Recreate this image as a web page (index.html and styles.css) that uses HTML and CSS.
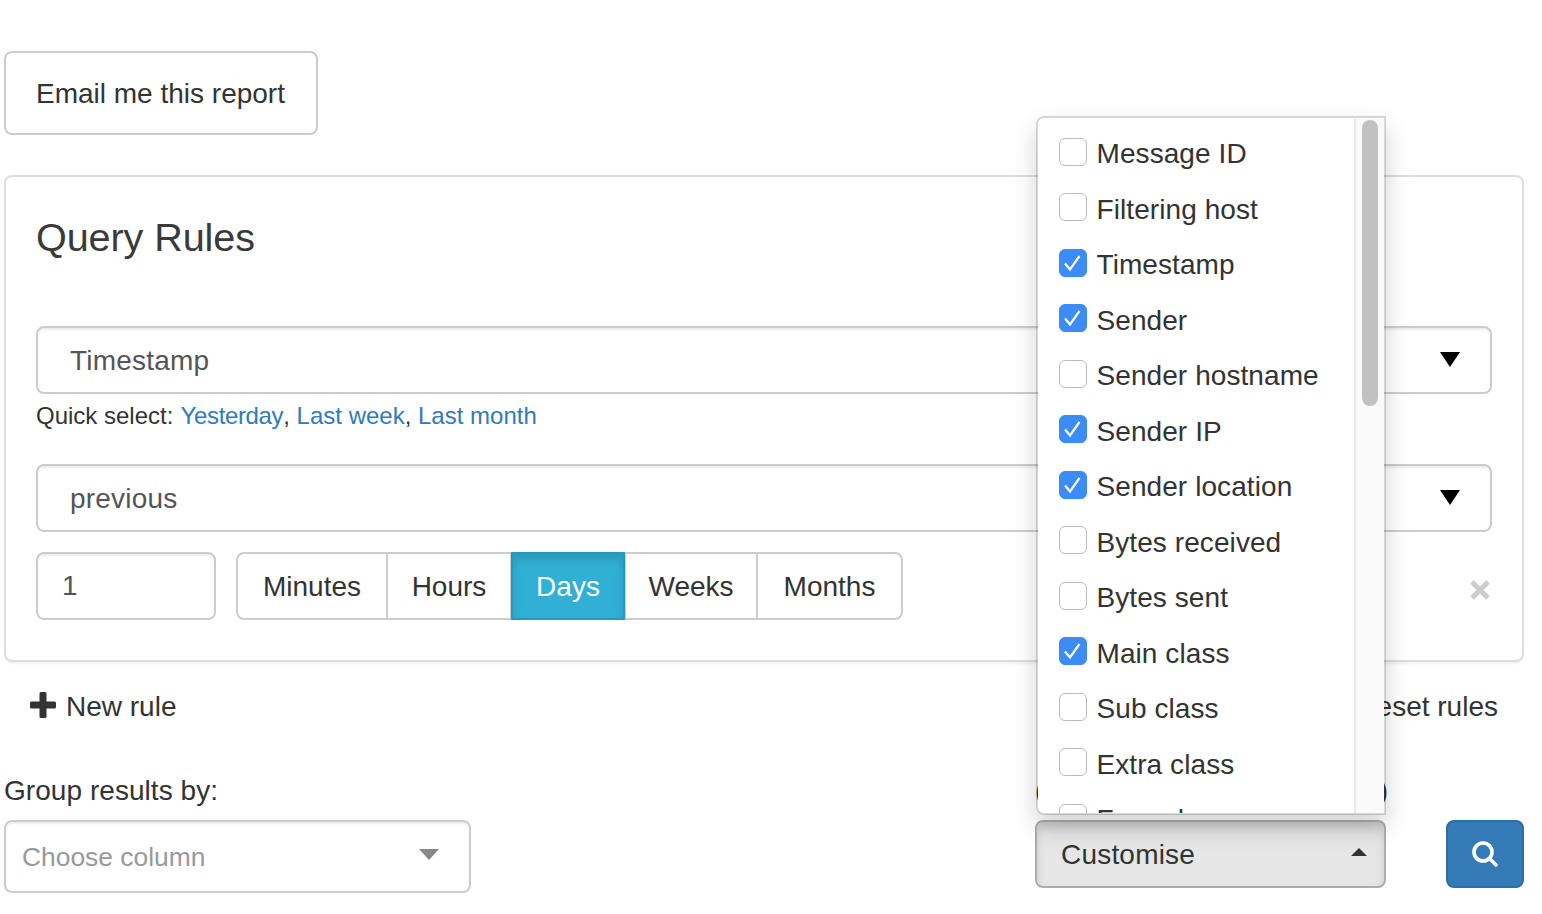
FILE: index.html
```html
<!DOCTYPE html>
<html lang="en">
<head>
<meta charset="utf-8">
<title>Query Rules</title>
<link rel="stylesheet" href="styles.css">
</head>
<body>
<main class="page">
  <button class="btn email-btn" type="button">Email me this report</button>

  <section class="panel">
    <h2 class="panel-title">Query Rules</h2>

    <div class="select rule-select">
      <span>Timestamp</span>
      <svg class="arrow-black" width="20" height="15" viewBox="0 0 20 15"><path d="M0 0H20L10 15Z"/></svg>
    </div>
    <p class="quick">Quick select: <a class="quick-first" href="#">Yesterday</a>, <a href="#">Last week</a>, <a href="#">Last month</a></p>

    <div class="select rule-select second">
      <span>previous</span>
      <svg class="arrow-black" width="20" height="15" viewBox="0 0 20 15"><path d="M0 0H20L10 15Z"/></svg>
    </div>

    <div class="rule-row">
      <div class="number-input">1</div>
      <div class="segmented">
        <button class="seg seg-minutes" type="button">Minutes</button>
        <button class="seg seg-hours" type="button">Hours</button>
        <button class="seg seg-days active" type="button">Days</button>
        <button class="seg seg-weeks" type="button">Weeks</button>
        <button class="seg seg-months" type="button">Months</button>
      </div>
      <svg class="remove" width="20" height="20" viewBox="0 0 20 20"><path d="M2 2L18 18M18 2L2 18"/></svg>
    </div>
  </section>

  <div class="links">
    <a class="link new-rule" href="#">
      <svg class="plus" width="26" height="26" viewBox="0 0 26 26"><path d="M9.5 1.5Q9.5 0 11 0H15Q16.500 0 16.500 1.500V9.500H24.500Q26 9.500 26 11V15Q26 16.500 24.500 16.500H16.500V24.500Q16.500 26 15 26H11Q9.500 26 9.500 24.500V16.500H1.500Q0 16.500 0 15V11Q0 9.500 1.500 9.500H9.500Z"/></svg>
      New rule
    </a>
    <a class="link" href="#">Reset rules</a>
  </div>

  <div class="bottom">
    <div class="group-col">
      <label class="label">Group results by:</label>
      <div class="select choose">
        <span>Choose column</span>
        <svg width="20" height="11" viewBox="0 0 20 11"><path d="M0 0H20L10 11Z"/></svg>
      </div>
    </div>

    <div class="customise-col">
      <div class="label parens"><span>(</span><span>)</span></div>
      <div class="customise-wrap">
        <div class="menu">
          <ul class="menu-list">
            <li class="item"><span class="check"></span>Message ID</li>
            <li class="item"><span class="check"></span>Filtering host</li>
            <li class="item"><span class="check on"><svg width="28" height="28" viewBox="0 0 28 28"><path d="M6 14.500L11 20.500L20.500 7"/></svg></span>Timestamp</li>
            <li class="item"><span class="check on"><svg width="28" height="28" viewBox="0 0 28 28"><path d="M6 14.500L11 20.500L20.500 7"/></svg></span>Sender</li>
            <li class="item"><span class="check"></span>Sender hostname</li>
            <li class="item"><span class="check on"><svg width="28" height="28" viewBox="0 0 28 28"><path d="M6 14.500L11 20.500L20.500 7"/></svg></span>Sender IP</li>
            <li class="item"><span class="check on"><svg width="28" height="28" viewBox="0 0 28 28"><path d="M6 14.500L11 20.500L20.500 7"/></svg></span>Sender location</li>
            <li class="item"><span class="check"></span>Bytes received</li>
            <li class="item"><span class="check"></span>Bytes sent</li>
            <li class="item"><span class="check on"><svg width="28" height="28" viewBox="0 0 28 28"><path d="M6 14.500L11 20.500L20.500 7"/></svg></span>Main class</li>
            <li class="item"><span class="check"></span>Sub class</li>
            <li class="item"><span class="check"></span>Extra class</li>
            <li class="item"><span class="check"></span>Forced</li>
          </ul>
          <div class="scroll-track"><div class="scroll-thumb"></div></div>
        </div>
        <button class="customise" type="button">
          <span>Customise</span>
          <svg width="16" height="8" viewBox="0 0 16 8"><path d="M8 0L16 8H0Z"/></svg>
        </button>
      </div>
    </div>

    <button class="search" type="button" aria-label="Search">
      <svg width="28" height="28" viewBox="0 0 28 28"><circle cx="12" cy="12" r="9"/><path d="M18.500 18.500L25 25"/></svg>
    </button>
  </div>
</main>
</body>
</html>
```

FILE: styles.css
```css
* { box-sizing: border-box; }

html, body {
  margin: 0;
  height: 100%;
  background: #fff;
}

body {
  overflow: hidden;
  font-family: "Liberation Sans", Arial, sans-serif;
  font-size: 28px;
  line-height: 40px;
  color: #333;
}

.page {
  padding: 51px 18px 0 4px;
}

.btn {
  display: block;
  width: 314px;
  height: 84px;
  padding: 2px 0 0 30px;
  text-align: left;
  font: inherit;
  color: #333;
  background: #fff;
  border: 2px solid #ccc;
  border-radius: 8px;
}

.panel {
  height: 487px;
  margin-top: 40px;
  padding: 31px 30px 30px;
  border: 2px solid #ddd;
  border-radius: 8px;
  box-shadow: 0 2px 2px rgba(0, 0, 0, .05);
}

.panel-title {
  height: 58px;
  margin: 0 0 60px;
  font-size: 39.6px;
  font-weight: 400;
  line-height: 58px;
  letter-spacing: -0.1px;
  color: #3a3a3a;
}

.select {
  display: flex;
  align-items: center;
  justify-content: space-between;
  border: 2px solid #ccc;
  border-radius: 8px;
  background: #fff;
  box-shadow: inset 0 2px 2px rgba(0, 0, 0, .075);
}

.rule-select {
  height: 68px;
  padding: 0 30px 0 32px;
  color: #555;
  letter-spacing: .2px;
}

.rule-select span { padding-top: 2px; }

.arrow-black { margin-top: -2px; }
.arrow-black path { fill: #000; }

.quick {
  height: 44px;
  margin: 0 0 26px;
  font-size: 24px;
  line-height: 44px;
}

.quick a { color: #337ab7; text-decoration: none; }
.quick .quick-first { margin-left: .5px; letter-spacing: -0.35px; }

.rule-row {
  display: flex;
  align-items: center;
  height: 68px;
  margin-top: 20px;
}

.number-input {
  width: 180px;
  height: 68px;
  padding: 0 0 0 24px;
  line-height: 64px;
  color: #555;
  border: 2px solid #ccc;
  border-radius: 8px;
  box-shadow: inset 0 2px 2px rgba(0, 0, 0, .075);
}

.segmented {
  display: flex;
  margin-left: 20px;
}

.seg {
  height: 68px;
  padding: 1px 0 0;
  margin-left: -2px;
  font: inherit;
  color: #333;
  background: #fff;
  border: 2px solid #ccc;
}

.seg-minutes { width: 152px; margin-left: 0; border-radius: 8px 0 0 8px; }
.seg-hours { width: 126px; }
.seg-days { width: 114px; margin-left: -1px; }
.seg-weeks { width: 134px; margin-left: -1px; }
.seg-months { width: 147px; border-radius: 0 8px 8px 0; }

.seg.active {
  position: relative;
  color: #fff;
  background: #31b0d5;
  border-color: #269abc;
  box-shadow: inset 0 6px 10px rgba(0, 0, 0, .125);
}

.remove {
  margin-left: auto;
  margin-right: 2px;
  margin-top: 8px;
}

.remove path {
  fill: none;
  stroke: #ccc;
  stroke-width: 5;
}

.links {
  display: flex;
  align-items: center;
  justify-content: space-between;
  height: 48px;
  margin-top: 20px;
  padding: 0 26px;
}

.link {
  display: flex;
  align-items: center;
  padding-top: 2px;
  color: #333;
  text-decoration: none;
}

.plus { margin-right: 10px; margin-top: -4px; }
.plus path { fill: #333; }

.bottom {
  display: flex;
  align-items: flex-start;
  margin-top: 40px;
}

.group-col { width: 467px; }

.label {
  display: block;
  height: 40px;
  margin-bottom: 10px;
  line-height: 42px;
  letter-spacing: .05px;
}

.choose {
  height: 73px;
  padding: 0 30px 0 16px;
  color: #999;
  font-size: 26.4px;
}

.choose svg { margin-top: -4px; }
.choose path { fill: #888; }

.customise-col {
  width: 351px;
  margin-left: auto;
}

.parens {
  display: flex;
  justify-content: space-between;
  margin-right: -2px;
  color: #333;
}

.customise-wrap { position: relative; }

.customise {
  display: flex;
  align-items: center;
  justify-content: space-between;
  width: 351px;
  height: 68px;
  padding: 0 17px 0 24px;
  font: inherit;
  letter-spacing: .2px;
  color: #333;
  background: #e6e6e6;
  border: 2px solid #adadad;
  border-radius: 8px;
  box-shadow: inset 0 6px 10px rgba(0, 0, 0, .125);
}

.customise span { padding-top: 2px; }
.customise svg { margin-top: -4px; }
.customise path { fill: #333; }

.menu {
  position: absolute;
  left: 1px;
  bottom: 73px;
  z-index: 10;
  width: 350px;
  height: 699px;
  overflow: hidden;
  background: #fff;
  border: 2px solid rgba(0, 0, 0, .15);
  border-radius: 8px 0 0 8px;
  background-clip: padding-box;
  box-shadow: 0 12px 24px rgba(0, 0, 0, .175);
}

.menu-list {
  margin: 0;
  padding: 6px 0 0 21px;
  list-style: none;
}

.item {
  display: flex;
  align-items: center;
  height: 55.5px;
  padding-top: 5px;
  white-space: nowrap;
  letter-spacing: .08px;
}

.check {
  flex: none;
  width: 28px;
  height: 28px;
  margin-top: -5px;
  margin-right: 9.5px;
  background: #fff;
  border: 1px solid #bbb;
  border-radius: 6px;
}

.check.on {
  background: #3b8cf6;
  border-color: #3b8cf6;
}

.check svg {
  display: block;
  margin: -1px;
}

.check path {
  fill: none;
  stroke: #fff;
  stroke-width: 2.2;
}

.scroll-track {
  position: absolute;
  top: 0;
  right: 0;
  bottom: 0;
  width: 30px;
  padding: 2px 6px 0 6px;
  background: #fafafa;
  border-left: 2px solid #e8e8e8;
}

.scroll-thumb {
  height: 286px;
  background: #c1c1c1;
  border-radius: 8px;
}

.search {
  display: flex;
  align-items: center;
  justify-content: center;
  width: 78px;
  height: 68px;
  margin-top: 50px;
  margin-left: 60px;
  padding: 0;
  background: #337ab7;
  border: 2px solid #2e6da4;
  border-radius: 8px;
}

.search circle, .search path {
  fill: none;
  stroke: #fff;
  stroke-width: 3.6;
  stroke-linecap: round;
}
```
